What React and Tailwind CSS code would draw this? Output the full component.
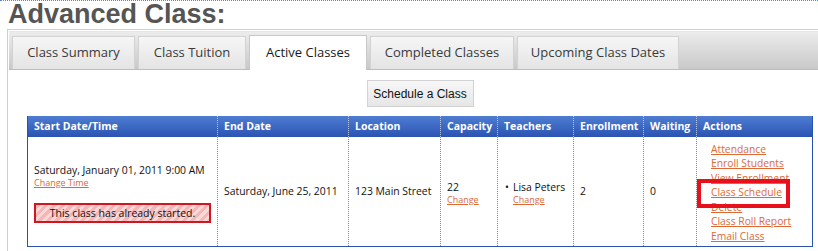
import React from 'react';

const tabs = [
  { label: 'Class Summary', w: 'w-[123px]' },
  { label: 'Class Tuition', w: 'w-[108px]' },
  { label: 'Active Classes', w: 'w-[118px]', active: true },
  { label: 'Completed Classes', w: 'w-[144px]' },
  { label: 'Upcoming Class Dates', w: 'w-[162px]' },
];

const actions = ['Attendance', 'Enroll Students', 'View Enrollment', 'Class Schedule', 'Delete', 'Class Roll Report', 'Email Class'];

const cols = [
  { label: 'Start Date/Time', w: 'w-[189px]' },
  { label: 'End Date', w: 'w-[131px]' },
  { label: 'Location', w: 'w-[92px]' },
  { label: 'Capacity', w: 'w-[57px]' },
  { label: 'Teachers', w: 'w-[76px]' },
  { label: 'Enrollment', w: 'w-[70px]' },
  { label: 'Waiting', w: 'w-[53px]' },
  { label: 'Actions', w: 'w-[116px]' },
];

const linkCls = 'text-[#dd6a35] underline underline-offset-1';
const cellSep = 'border-l border-dotted border-[#888]';

const App = () => {
  return (
    <div className="w-[818px] h-[251px] overflow-hidden bg-white border-t border-dotted border-[#5b82d4] font-['Open_Sans','Noto_Sans',sans-serif] text-[#222]">
      <h1 className="pl-[8px] h-[28px] font-['Liberation_Sans',Arial,sans-serif] font-bold text-[27px] leading-[26px] text-[#555]">
        Advanced Class:
      </h1>

      <div className="ml-[7px] w-[840px] h-[240px] border border-[#cfcfcf] p-[1px]">
        {/* tab bar */}
        <div className="h-[39px] flex items-end gap-[3px] pl-[3px] bg-gradient-to-b from-[#ececec] to-[#c9c9c9] border-b border-[#bdbdbd] border-t border-t-[#e6e6e6]">
          {tabs.map((t) =>
            t.active ? (
              <div key={t.label} className={`${t.w} h-[35px] -mb-[1px] flex items-center justify-center bg-white border border-b-0 border-[#c8c8c8] text-[13px] text-[#1a1a1a]`}>
                {t.label}
              </div>
            ) : (
              <div key={t.label} className={`${t.w} h-[33px] flex items-center justify-center bg-gradient-to-b from-[#f6f6f6] to-[#e4e4e4] border border-b-0 border-[#d2d2d2] text-[13px] text-[#3a3a3a]`}>
                {t.label}
              </div>
            )
          )}
        </div>

        {/* content */}
        <div className="pl-[18px] pt-[10px]">
          <div className="w-[786px] flex justify-center">
            <button className="w-[107px] h-[27px] bg-gradient-to-b from-[#f7f7f7] to-[#e6e6e6] border border-[#d2d2d2] font-['Liberation_Sans',Arial,sans-serif] text-[12px] text-[#111]">
              Schedule a Class
            </button>
          </div>

          <div className="mt-[9px] w-[786px] border border-t-0 border-[#2a52b0] relative">
            <div className="flex h-[21px] bg-gradient-to-b from-[#4f7dd2] to-[#2b53b3]">
              {cols.map((c, i) => (
                <div
                  key={c.label}
                  className={`${c.w} shrink-0 flex items-center pl-[6px] text-white font-bold text-[10.5px] ${i > 0 ? 'border-l border-dotted border-[#b8c8ea]' : ''}`}
                >
                  {c.label}
                </div>
              ))}
            </div>

            <div className="flex h-[109px] text-[10.4px] leading-[13px] text-[#111]">
              <div className="w-[189px] shrink-0 flex flex-col justify-center pl-[6px] pt-[4px]">
                <div>Saturday, January 01, 2011 9:00 AM</div>
                <div className={`${linkCls} text-[9px] leading-[12px]`}>Change Time</div>
                <div className="mt-[14px] w-[177px] h-[20px] flex items-center justify-center border-2 border-[#d4141e] bg-[repeating-linear-gradient(135deg,#f6b6b6_0px,#f6b6b6_3px,#fbd8d8_3px,#fbd8d8_6px)] text-[10.5px] font-medium">
                  This class has already started.
                </div>
              </div>
              <div className={`w-[131px] shrink-0 flex items-center pl-[6px] ${cellSep}`}>
                Saturday, June 25, 2011
              </div>
              <div className={`w-[92px] shrink-0 flex items-center pl-[6px] ${cellSep}`}>
                123 Main Street
              </div>
              <div className={`w-[57px] shrink-0 flex flex-col justify-center pl-[6px] ${cellSep}`}>
                <div className="mt-[4px]">22</div>
                <div className={`${linkCls} text-[9px] leading-[12px]`}>Change</div>
              </div>
              <div className={`w-[76px] shrink-0 flex flex-col justify-center pl-[7px] ${cellSep}`}>
                <div className="mt-[4px] flex">
                  <span className="w-[8px]">•</span>Lisa Peters
                </div>
                <div className={`${linkCls} pl-[8px] text-[9px] leading-[12px]`}>Change</div>
              </div>
              <div className={`w-[70px] shrink-0 flex items-center pl-[6px] ${cellSep}`}>
                2
              </div>
              <div className={`w-[53px] shrink-0 flex items-center pl-[6px] ${cellSep}`}>
                0
              </div>
              <div className={`w-[116px] shrink-0 flex flex-col justify-center pl-[14px] pt-[2px] ${cellSep} text-[10.3px] leading-[14.4px]`}>
                {actions.map((a) => (
                  <div key={a} className={linkCls}>{a}</div>
                ))}
              </div>
            </div>

            {/* highlight on Class Schedule */}
            <div className="absolute left-[669px] top-[63px] w-[93px] h-[29px] border-[4px] border-[#e8101a]" />
          </div>
        </div>
      </div>
    </div>
  );
};

export default App;
